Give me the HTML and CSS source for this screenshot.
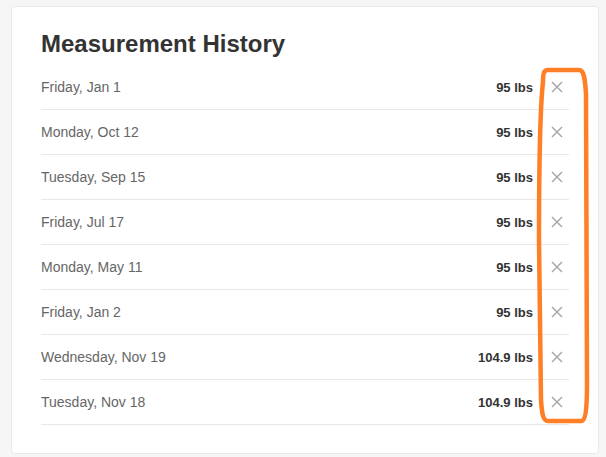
FILE: index.html
```html
<!DOCTYPE html>
<html lang="en">
<head>
    <meta charset="UTF-8">
    <meta name="viewport" content="width=device-width, initial-scale=1.0">
    <title>Measurement History</title>
    <link rel="stylesheet" href="styles.css">
</head>
<body>
    <div class="card">
        <h2 class="card-title">Measurement History</h2>

        <ul class="history">
            <li class="entry">
                <span class="entry-date">Friday, Jan 1</span>
                <span class="entry-weight">95 lbs</span>
                <button class="remove" title="Remove"><svg viewBox="0 0 12 12"><path d="M1 1L11 11M11 1L1 11"/></svg></button>
            </li>
            <li class="entry">
                <span class="entry-date">Monday, Oct 12</span>
                <span class="entry-weight">95 lbs</span>
                <button class="remove" title="Remove"><svg viewBox="0 0 12 12"><path d="M1 1L11 11M11 1L1 11"/></svg></button>
            </li>
            <li class="entry">
                <span class="entry-date">Tuesday, Sep 15</span>
                <span class="entry-weight">95 lbs</span>
                <button class="remove" title="Remove"><svg viewBox="0 0 12 12"><path d="M1 1L11 11M11 1L1 11"/></svg></button>
            </li>
            <li class="entry">
                <span class="entry-date">Friday, Jul 17</span>
                <span class="entry-weight">95 lbs</span>
                <button class="remove" title="Remove"><svg viewBox="0 0 12 12"><path d="M1 1L11 11M11 1L1 11"/></svg></button>
            </li>
            <li class="entry">
                <span class="entry-date">Monday, May 11</span>
                <span class="entry-weight">95 lbs</span>
                <button class="remove" title="Remove"><svg viewBox="0 0 12 12"><path d="M1 1L11 11M11 1L1 11"/></svg></button>
            </li>
            <li class="entry">
                <span class="entry-date">Friday, Jan 2</span>
                <span class="entry-weight">95 lbs</span>
                <button class="remove" title="Remove"><svg viewBox="0 0 12 12"><path d="M1 1L11 11M11 1L1 11"/></svg></button>
            </li>
            <li class="entry">
                <span class="entry-date">Wednesday, Nov 19</span>
                <span class="entry-weight">104.9 lbs</span>
                <button class="remove" title="Remove"><svg viewBox="0 0 12 12"><path d="M1 1L11 11M11 1L1 11"/></svg></button>
            </li>
            <li class="entry">
                <span class="entry-date">Tuesday, Nov 18</span>
                <span class="entry-weight">104.9 lbs</span>
                <button class="remove" title="Remove"><svg viewBox="0 0 12 12"><path d="M1 1L11 11M11 1L1 11"/></svg></button>
            </li>
        </ul>
    </div>

    <!-- hand-drawn highlight around the remove column -->
    <svg class="annotation" viewBox="0 0 606 457">
        <path d="M543 82 C543 73 544 70 548 70 L579 70 C584 70 585 78 586 94 L587 384 C587 412 585 421 581 421 L548 421 C543 421 542 414 541 400 L539 240 C539 150 541 100 543 82 Z"/>
    </svg>
</body>
</html>
```

FILE: styles.css
```css
body 
{
    margin: 0;
    padding: 6px 7px 0 11px;
    background-color: #f6f6f6;
    font-family: "Liberation Sans", Arial, sans-serif;
    color: #333;
}
.card 
{
    background-color: #fff;
    border: 1px solid #e9e9e9;
    border-radius: 4px;
    padding: 24px 29px 28px 29px;
    height: 394px;
}
.card-title 
{
    margin: 0 0 8px 0;
    font-size: 24px;
    line-height: 26px;
    font-weight: bold;
    color: #333;
}
.history 
{
    list-style: none;
    margin: 0;
    padding: 0;
}
.entry 
{
    display: flex;
    align-items: center;
    height: 44px;
    border-bottom: 1px solid #e8e8e8;
}
.entry-date 
{
    flex: 1;
    font-size: 14px;
    color: #666;
}
.entry-weight 
{
    font-size: 13px;
    font-weight: bold;
    color: #333;
}
.remove 
{
    display: flex;
    align-items: center;
    justify-content: center;
    width: 24px;
    height: 24px;
    margin-left: 12px;
    padding: 0;
    border: none;
    background: none;
    cursor: pointer;
}
.remove svg 
{
    width: 12px;
    height: 12px;
    fill: none;
    stroke: #a9a9a9;
    stroke-width: 1.5;
}
.annotation 
{
    position: absolute;
    top: 0;
    left: 0;
    width: 606px;
    height: 457px;
    pointer-events: none;
    fill: none;
    stroke: #ff7f27;
    stroke-width: 4.5;
}
```
